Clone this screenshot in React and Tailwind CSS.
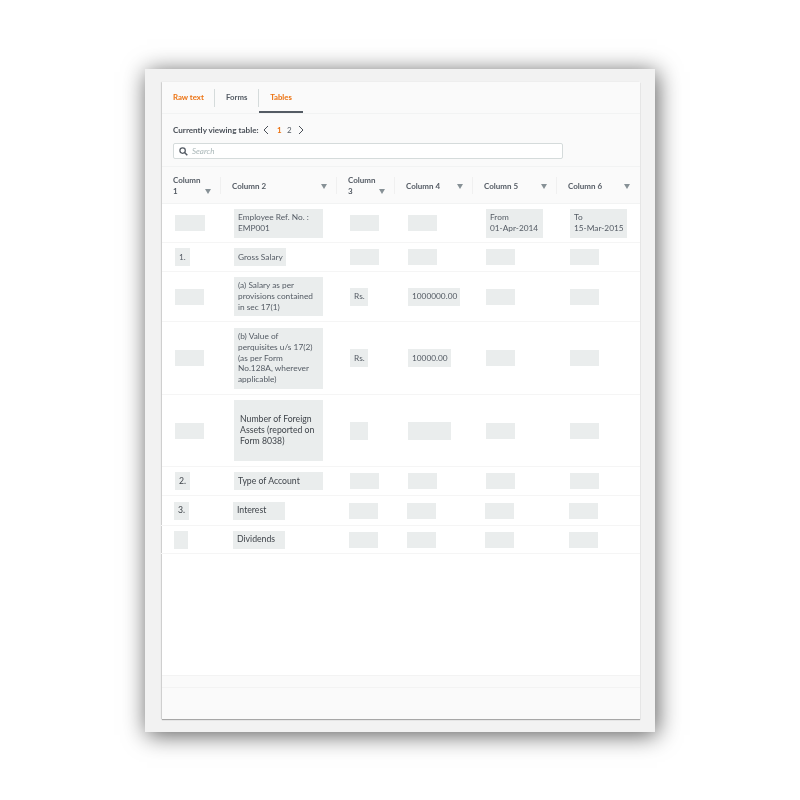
const columns = ["Column 1", "Column 2", "Column 3", "Column 4", "Column 5", "Column 6"];
const gridClass = "grid grid-cols-[59px_116px_58px_78px_84px_83px]";

// one [text, width, height] per column: the grey highlight boxes
const rows = [
    { h: "h-[39px]", cells: [["", 30, 16], ["Employee Ref. No. :\nEMP001", 89, 29], ["", 29, 16], ["", 29, 16], ["From\n01-Apr-2014", 57, 29], ["To\n15-Mar-2015", 57, 29]] },
    { h: "h-[29px]", cells: [["1.", 15, 18], ["Gross Salary", 52, 18], ["", 29, 16], ["", 29, 16], ["", 29, 16], ["", 29, 16]] },
    { h: "h-[50px]", cells: [["", 29, 16], ["(a) Salary as per\nprovisions contained\nin sec 17(1)", 89, 39], ["Rs.", 18, 18], ["1000000.00", 52, 18], ["", 29, 16], ["", 29, 16]] },
    { h: "h-[73px]", cells: [["", 29, 16], ["(b) Value of\nperquisites u/s 17(2)\n(as per Form\nNo.128A, wherever\napplicable)", 89, 61], ["Rs.", 18, 18], ["10000.00", 43, 18], ["", 29, 16], ["", 29, 16]] },
    { h: "h-[72px]", dark: true, inset: true, cells: [["", 29, 16], ["Number of Foreign\nAssets (reported on\nForm 8038)", 89, 61], ["", 18, 18], ["", 43, 18], ["", 29, 16], ["", 29, 16]] },
    { h: "h-[29px]", dark: true, cells: [["2.", 15, 18], ["Type of Account", 89, 18], ["", 29, 16], ["", 29, 16], ["", 29, 16], ["", 29, 16]] },
    { h: "h-[30px]", dark: true, shift: true, cells: [["3.", 15, 18], ["Interest", 52, 18], ["", 29, 16], ["", 29, 16], ["", 29, 16], ["", 29, 16]] },
    { h: "h-[28px]", dark: true, shift: true, cells: [["", 14, 18], ["Dividends", 52, 18], ["", 29, 16], ["", 29, 16], ["", 29, 16], ["", 29, 16]] },
];

function Chevron({ d }) {
    return (
        <svg viewBox="0 0 8 10" fill="none" className="h-[10px] w-[8px]">
            <path d={d} stroke="currentColor" strokeWidth="1" />
        </svg>
    );
}

function HeaderCell({ label, index }) {
    const wrap = index === 0 || index === 2;
    return (
        <div className="relative flex items-center pl-[11px] pr-[10px] pt-[2px]">
            <span className={`text-[8px] font-bold leading-[11px] text-[#545b64] ${wrap ? "w-[30px]" : ""}`}>{label}</span>
            <span className={`ml-auto h-0 w-0 border-x-[3.5px] border-t-[5px] border-x-transparent border-t-[#879196] ${wrap ? "mt-[11px]" : ""}`} />
            {index < 5 && <span className="absolute right-0 top-[10px] h-[17px] w-px bg-[#f0f0f0]" />}
        </div>
    );
}

function Cell({ text, width, height, dark, inset }) {
    return (
        <div className="flex items-center pl-[13px]">
            <div
                className={`flex items-center whitespace-pre bg-[#eaeded] leading-[10.8px] ${inset ? "pl-[6px]" : "pl-1"} ${dark ? "text-[8.7px] text-[#3f444a]" : "text-[8.3px] text-[#545b64]"}`}
                style={{ width, height }}
            >
                {text}
            </div>
        </div>
    );
}

export default function App() {
    return (
        <div className="flex h-[800px] w-[800px] bg-white pl-[145px] pt-[69px] font-['Lato',sans-serif]">
            <div className="h-[663px] w-[510px] bg-[#f2f2f2] pl-[17px] pt-[13px] shadow-[2px_3px_22px_rgba(0,0,0,0.65)]">
                <div className="flex h-[637px] w-[478px] flex-col bg-[#fafafa] shadow-[0_1px_1px_rgba(0,0,0,0.3),-1px_0_1px_rgba(0,0,0,0.1)] blur-[0.6px]">
                    <div className="flex h-[32px] border-b border-[#f2f3f3] pl-[11px] text-[7.8px] font-bold">
                        <div className="flex items-center pt-[1px]">
                            <span className="w-[42px] whitespace-nowrap border-r border-[#d5dbdb] py-[3px] text-[#ec7211]">Raw text</span>
                            <span className="w-[44px] border-r border-[#d5dbdb] py-[3px] pl-[11px] text-[#545b64]">Forms</span>
                        </div>
                        <div className="flex w-[44px] items-center justify-center border-b-[2px] border-[#545b64] pt-[3px] text-[#ec7211]">Tables</div>
                    </div>

                    <div className="flex h-[53px] flex-col border-b border-[#f2f3f3] pl-[11px]">
                        <div className="mt-[10px] flex h-[12px] items-center text-[#4a5058]">
                            <span className="w-[89px] whitespace-nowrap text-[8.1px] font-bold">Currently viewing table:</span>
                            <Chevron d="M6 1L2 5l4 4" />
                            <span className="ml-[7px] w-[8px] text-[8px] font-bold text-[#ec7211]">1</span>
                            <span className="ml-[2px] w-[9px] text-[8px] text-[#545b64]">2</span>
                            <span className="ml-[1px]">
                                <Chevron d="M2 1l4 4-4 4" />
                            </span>
                        </div>
                        <div className="mt-[7px] flex h-[16px] w-[390px] items-center rounded-[2px] border border-[#d5dbdb] bg-white pl-[5px]">
                            <svg viewBox="0 0 10 10" fill="none" className="h-[9px] w-[9px] text-[#545b64]">
                                <circle cx="4" cy="4" r="3" stroke="currentColor" strokeWidth="1.4" />
                                <path d="M6.2 6.2L9.2 9.2" stroke="currentColor" strokeWidth="1.6" />
                            </svg>
                            <span className="ml-[4px] text-[8px] italic text-[#aab7b8]">Search</span>
                        </div>
                    </div>

                    <div className={`${gridClass} h-[37px] border-b border-[#f2f3f3]`}>
                        {columns.map((label, i) => (
                            <HeaderCell key={label} label={label} index={i} />
                        ))}
                    </div>

                    <div className="flex h-[471px] flex-col bg-white">
                        {rows.map((row, i) => (
                            <div key={i} className={`${gridClass} ${row.h} border-b border-[#f5f5f5] ${row.shift ? "-ml-px" : ""}`}>
                                {row.cells.map(([text, width, height], j) => (
                                    <Cell key={j} text={text} width={width} height={height} dark={row.dark} inset={row.inset} />
                                ))}
                            </div>
                        ))}
                    </div>

                    <div className="h-[13px] border-y border-[#f3f3f3] bg-[#fafafa]" />
                    <div className="flex-1 bg-[#fafafa]" />
                </div>
            </div>
        </div>
    );
}
